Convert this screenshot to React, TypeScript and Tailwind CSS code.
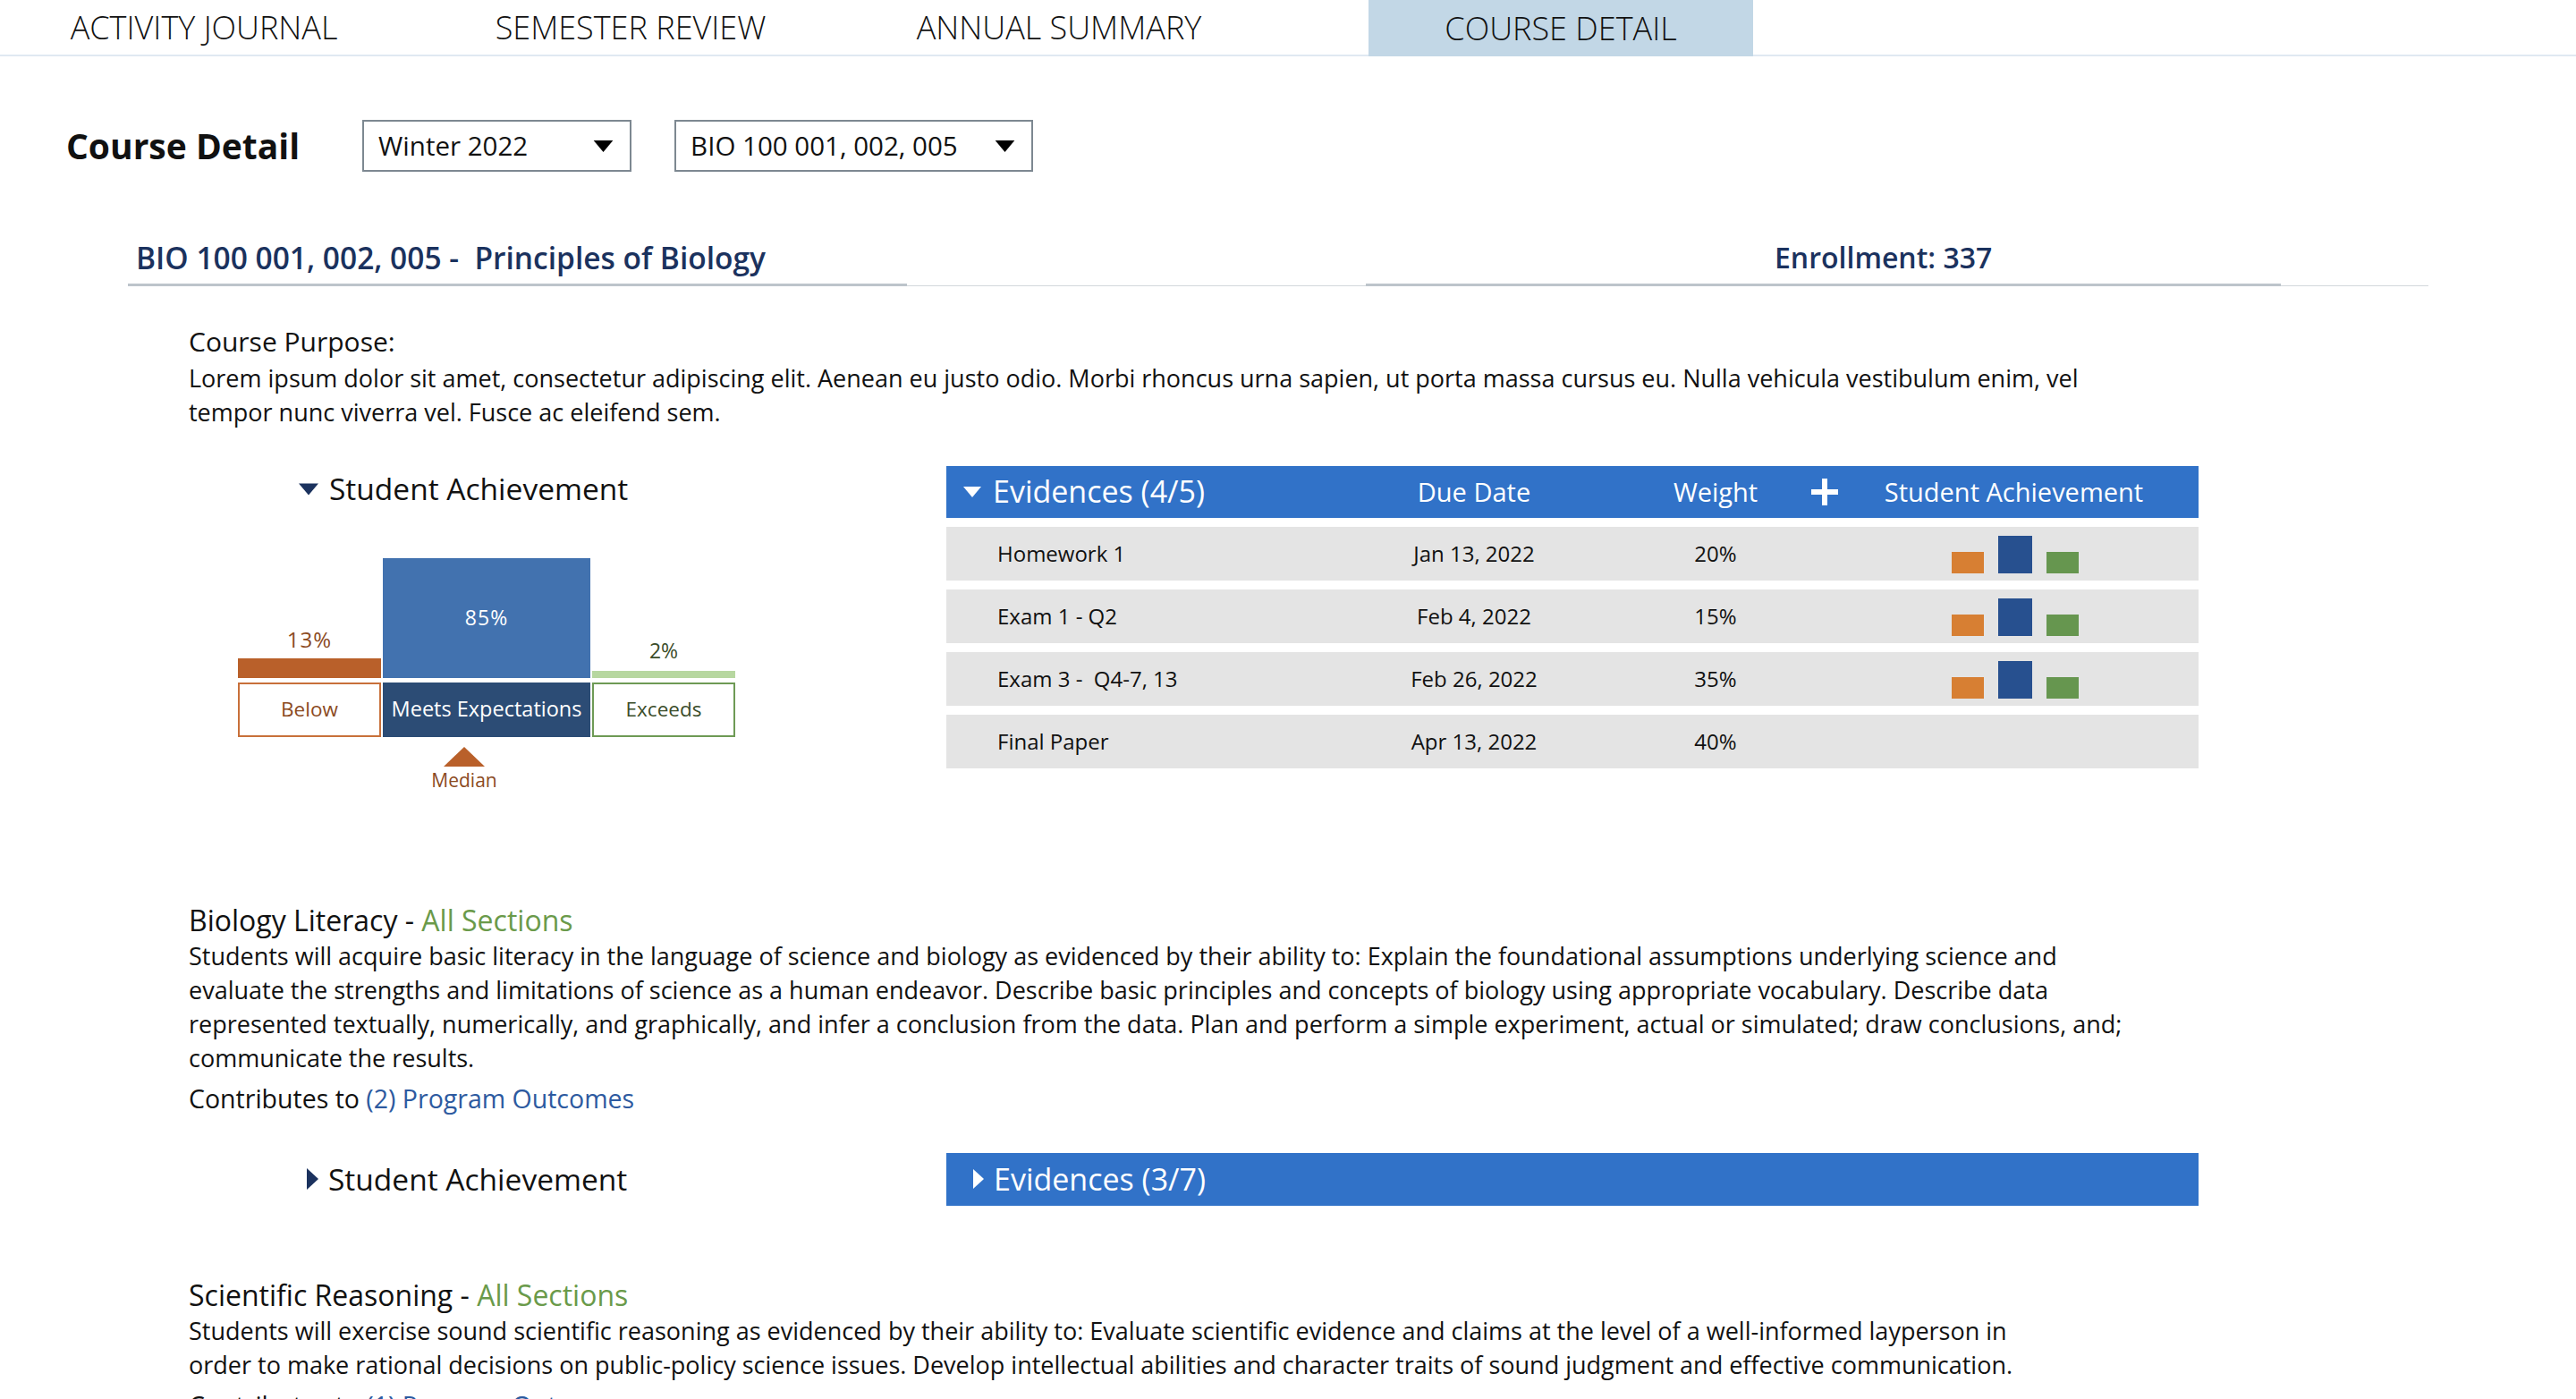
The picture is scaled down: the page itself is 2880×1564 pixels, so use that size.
const font = "font-['Open_Sans',sans-serif]";

const evidences = [
  { name: "Homework 1", due: "Jan 13, 2022", weight: "20%", bars: true },
  { name: "Exam 1 - Q2", due: "Feb 4, 2022", weight: "15%", bars: true },
  { name: "Exam 3 -  Q4-7, 13", due: "Feb 26, 2022", weight: "35%", bars: true },
  { name: "Final Paper", due: "Apr 13, 2022", weight: "40%", bars: false },
];

const TriangleDown = ({ className }: { className: string }) => (
  <svg viewBox="0 0 20 12" className={className}>
    <polygon points="0,0 20,0 10,12" fill="currentColor" />
  </svg>
);

const TriangleRight = ({ className }: { className: string }) => (
  <svg viewBox="0 0 12 22" className={className}>
    <polygon points="0,0 12,11 0,22" fill="currentColor" />
  </svg>
);

const Dropdown = ({ label, width }: { label: string; width: string }) => (
  <div
    className={`flex h-[58px] items-center justify-between border-2 border-[#7d8891] pl-[16px] pr-[16px] ${width}`}
  >
    <span className="text-[29.5px] text-[#111]">{label}</span>
    <TriangleDown className="h-[13px] w-[27px] text-black" />
  </div>
);

const MiniBars = () => (
  <div className="flex h-full items-end gap-[16px] pb-[8px]">
    <div className="h-[24px] w-[36px] bg-[#d77f33]" />
    <div className="h-[42px] w-[38px] bg-[#27508f]" />
    <div className="h-[24px] w-[36px] bg-[#66964f]" />
  </div>
);

const AchievementChart = () => (
  <div className="ml-[55px] mt-[51px] w-[556px]">
    <div className="flex h-[134px] items-end gap-[2px]">
      <div className="flex w-[160px] flex-col items-center">
        <span className="mb-[3px] text-[24px] tracking-[1px] text-[#8b4a1e]">13%</span>
        <div className="h-[22px] w-full bg-[#b9602a]" />
      </div>
      <div className="flex h-[134px] w-[232px] items-center justify-center bg-[#4272af] text-[23px] tracking-[1px] text-white">
        85%
      </div>
      <div className="flex w-[160px] flex-col items-center">
        <span className="mb-[5px] text-[23px] text-[#3b4d2a]">2%</span>
        <div className="h-[8px] w-full bg-[#b7d7a0]" />
      </div>
    </div>
    <div className="mt-[5px] flex gap-[2px] text-[22.5px]">
      <div className="flex h-[61px] w-[160px] items-center justify-center border-2 border-[#c8703a] text-[#8b4a1e]">
        Below
      </div>
      <div className="flex h-[61px] w-[232px] items-center justify-center bg-[#2c4c75] text-[23.5px] text-white">
        Meets Expectations
      </div>
      <div className="flex h-[61px] w-[160px] items-center justify-center border-2 border-[#6e9a55] text-[#3b4d2a]">
        Exceeds
      </div>
    </div>
    <div className="ml-[207px] mt-[11px] flex w-[92px] flex-col items-center">
      <svg viewBox="0 0 46 22" className="h-[22px] w-[46px]">
        <polygon points="0,22 23,0 46,22" fill="#b9602a" />
      </svg>
      <span className="text-[21px] leading-[30px] text-[#8b4a1e]">Median</span>
    </div>
  </div>
);

const EvidenceTable = () => (
  <div className="flex w-[1400px] flex-col gap-[10px]">
    <div className="grid h-[58px] grid-cols-[442px_296px_244px_1fr] items-center bg-[#3172c8] text-white">
      <div className="flex items-center gap-[12px] pl-[18px]">
        <TriangleDown className="h-[12px] w-[22px] text-white" />
        <span className="text-[34px]">Evidences (4/5)</span>
      </div>
      <span className="text-center text-[29px]">Due Date</span>
      <span className="text-center text-[29px]">Weight</span>
      <div className="flex items-center">
        <svg viewBox="0 0 30 30" className="-ml-[15px] h-[30px] w-[30px]">
          <rect x="12" y="0" width="6" height="30" fill="white" />
          <rect x="0" y="12" width="30" height="6" fill="white" />
        </svg>
        <span className="flex-1 pr-[10px] text-center text-[29px]">Student Achievement</span>
      </div>
    </div>
    {evidences.map((row) => (
      <div
        key={row.name}
        className="grid h-[60px] grid-cols-[442px_296px_244px_1fr] items-center bg-[#e4e4e4] text-[24px] text-[#111]"
      >
        <span className="whitespace-pre pl-[57px]">{row.name}</span>
        <span className="text-center">{row.due}</span>
        <span className="text-center">{row.weight}</span>
        <div className="flex h-full justify-center pl-[8px]">{row.bars && <MiniBars />}</div>
      </div>
    ))}
  </div>
);

const Outcome = ({
  title,
  text,
  outcomes,
  width,
}: {
  title: string;
  text: string;
  outcomes: string;
  width: string;
}) => (
  <div>
    <h3 className="text-[32px] leading-[42px] text-[#111]">
      {title} - <span className="text-[#6a9a4a]">All Sections</span>
    </h3>
    <p className={`text-[27px] leading-[38px] text-[#111] ${width}`}>{text}</p>
    <p className="mt-[7px] text-[28.5px] leading-[38px] text-[#111]">
      Contributes to <span className="text-[#2d5aa0]">{outcomes}</span>
    </p>
  </div>
);

export default function App() {
  return (
    <div className={`min-h-screen w-[2880px] overflow-hidden bg-white ${font}`}>
      <nav className="flex h-[63px] border-b-2 border-[#e0e9f2] text-[36px] font-light text-[#111]">
        <div className="flex w-[456px] items-center justify-center">ACTIVITY JOURNAL</div>
        <div className="flex w-[498px] items-center justify-center">SEMESTER REVIEW</div>
        <div className="flex w-[460px] items-center justify-center">ANNUAL SUMMARY</div>
        <div className="ml-[116px] flex h-[63px] w-[430px] shrink-0 items-center justify-center bg-[#c2d7e6]">
          COURSE DETAIL
        </div>
      </nav>

      <header className="mt-[71px] flex items-center pl-[74px]">
        <h1 className="text-[39px] font-bold text-[#111]">Course Detail</h1>
        <div className="ml-[70px]">
          <Dropdown label="Winter 2022" width="w-[301px]" />
        </div>
        <div className="ml-[48px]">
          <Dropdown label="BIO 100 001, 002, 005" width="w-[401px]" />
        </div>
      </header>

      <div className="ml-[143px] mt-[74px] flex w-[2572px] items-end border-b border-[#d3d7db]">
        <div className="-mb-px w-[871px] border-b-[3px] border-[#bdc4cb] pb-[8px] pl-[9px]">
          <h2 className="whitespace-pre text-[33.5px] font-semibold leading-[42px] text-[#1b325e]">
            BIO 100 001, 002, 005 -  Principles of Biology
          </h2>
        </div>
        <div className="-mb-px ml-[513px] w-[1023px] border-b-[3px] border-[#bdc4cb] pb-[8px] pl-[457px]">
          <h2 className="text-[32px] font-semibold leading-[42px] text-[#1b325e]">Enrollment: 337</h2>
        </div>
      </div>

      <main className="pl-[211px]">
        <section className="mt-[43px]">
          <h3 className="text-[30px] leading-[38px] text-[#111]">Course Purpose:</h3>
          <p className="mt-[3px] max-w-[2160px] text-[27px] leading-[38px] text-[#111]">
            Lorem ipsum dolor sit amet, consectetur adipiscing elit. Aenean eu justo odio. Morbi
            rhoncus urna sapien, ut porta massa cursus eu. Nulla vehicula vestibulum enim, vel
            tempor nunc viverra vel. Fusce ac eleifend sem.
          </p>
        </section>

        <section className="mt-[41px] flex items-start">
          <div className="w-[847px]">
            <div className="flex h-[52px] items-center gap-[12px] pl-[123px]">
              <TriangleDown className="h-[16px] w-[22px] text-[#1b325e]" />
              <span className="text-[33.5px] text-[#111]">Student Achievement</span>
            </div>
            <AchievementChart />
          </div>
          <EvidenceTable />
        </section>

        <section className="mt-[121px]">
          <Outcome
            title="Biology Literacy"
            width="max-w-[2185px]"
            text="Students will acquire basic literacy in the language of science and biology as evidenced by their ability to: Explain the foundational assumptions underlying science and evaluate the strengths and limitations of science as a human endeavor. Describe basic principles and concepts of biology using appropriate vocabulary. Describe data represented textually, numerically, and graphically, and infer a conclusion from the data. Plan and perform a simple experiment, actual or simulated; draw conclusions, and; communicate the results."
            outcomes="(2) Program Outcomes"
          />
        </section>

        <section className="mt-[42px] flex items-center">
          <div className="flex w-[847px] items-center gap-[11px] pl-[132px]">
            <TriangleRight className="h-[24px] w-[13px] text-[#1b325e]" />
            <span className="text-[33.5px] text-[#111]">Student Achievement</span>
          </div>
          <div className="flex h-[59px] w-[1400px] items-center gap-[11px] bg-[#3172c8] pl-[30px] text-white">
            <TriangleRight className="h-[22px] w-[12px] text-white" />
            <span className="text-[34px]">Evidences (3/7)</span>
          </div>
        </section>

        <section className="mt-[79px] pb-[40px]">
          <Outcome
            title="Scientific Reasoning"
            width="max-w-[2090px]"
            text="Students will exercise sound scientific reasoning as evidenced by their ability to: Evaluate scientific evidence and claims at the level of a well-informed layperson in order to make rational decisions on public-policy science issues. Develop intellectual abilities and character traits of sound judgment and effective communication."
            outcomes="(1) Program Outcomes"
          />
        </section>
      </main>
    </div>
  );
}
